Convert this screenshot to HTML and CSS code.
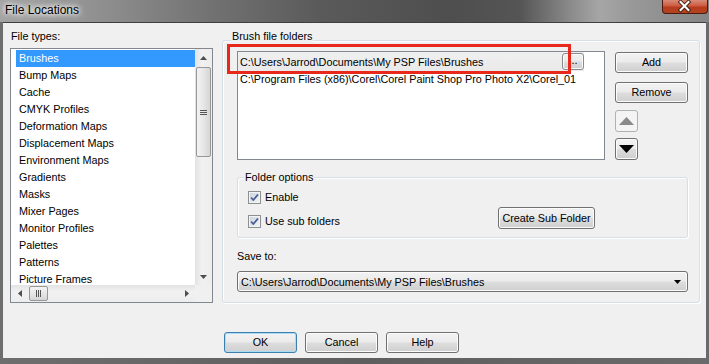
FILE: index.html
```html
<!DOCTYPE html>
<html>
<head>
<meta charset="utf-8">
<title>File Locations</title>
<link rel="stylesheet" href="styles.css">
</head>
<body>
<div class="window">
  <div class="titlebar">
    <div class="title">File Locations</div>
    <div class="close">
      <svg width="46" height="14" viewBox="0 0 46 14">
        <path d="M19 3 L27 11 M27 3 L19 11" stroke="#3a1a10" stroke-width="4" stroke-linecap="square"/>
        <path d="M19 3 L27 11 M27 3 L19 11" stroke="#ffffff" stroke-width="2.2" stroke-linecap="square"/>
      </svg>
    </div>
  </div>
  <div class="frame">
    <div class="client">
      <div class="main">
        <div class="types">
          <div class="label">File types:</div>
          <div class="listbox">
            <ul class="items">
              <li class="sel">Brushes</li>
              <li>Bump Maps</li>
              <li>Cache</li>
              <li>CMYK Profiles</li>
              <li>Deformation Maps</li>
              <li>Displacement Maps</li>
              <li>Environment Maps</li>
              <li>Gradients</li>
              <li>Masks</li>
              <li>Mixer Pages</li>
              <li>Monitor Profiles</li>
              <li>Palettes</li>
              <li>Patterns</li>
              <li>Picture Frames</li>
            </ul>
            <div class="vscroll">
              <div class="arrow"><svg width="7" height="4" viewBox="0 0 7 4"><path d="M0 4 L3.5 0 L7 4 Z" fill="#4d4d4d"/></svg></div>
              <div class="vthumb"><span class="grip-v"></span></div>
              <div class="track"></div>
              <div class="arrow"><svg width="7" height="4" viewBox="0 0 7 4"><path d="M0 0 L3.5 4 L7 0 Z" fill="#4d4d4d"/></svg></div>
            </div>
            <div class="hscroll">
              <div class="arrow"><svg width="4" height="7" viewBox="0 0 4 7"><path d="M4 0 L0 3.5 L4 7 Z" fill="#4d4d4d"/></svg></div>
              <div class="hthumb"><span class="grip-h"></span></div>
              <div class="track"></div>
              <div class="arrow"><svg width="4" height="7" viewBox="0 0 4 7"><path d="M0 0 L4 3.5 L0 7 Z" fill="#4d4d4d"/></svg></div>
            </div>
            <div class="corner"></div>
          </div>
        </div>
        <div class="group brush">
          <div class="group-title">Brush file folders</div>
          <div class="folders-row">
            <div class="folders">
              <div class="edit-row">
                <span class="edit-text">C:\Users\Jarrod\Documents\My PSP Files\Brushes</span>
                <span class="btn browse">...</span>
              </div>
              <div class="folder-row">C:\Program Files (x86)\Corel\Corel Paint Shop Pro Photo X2\Corel_01</div>
            </div>
            <div class="side-buttons">
              <span class="btn side">Add</span>
              <span class="btn side remove">Remove</span>
              <span class="btn square disabled">
                <svg width="15" height="8" viewBox="0 0 15 8"><path d="M0 8 L7.5 0 L15 8 Z" fill="#8a8a8a"/></svg>
              </span>
              <span class="btn square down">
                <svg width="15" height="8" viewBox="0 0 15 8"><path d="M0 0 L7.5 8 L15 0 Z" fill="#000"/></svg>
              </span>
            </div>
          </div>
          <div class="group options">
            <div class="group-title small">Folder options</div>
            <div class="options-body">
              <div class="checks">
                <div class="check-row"><span class="checkbox"><svg width="11" height="11" viewBox="0 0 11 11"><path d="M2 5.5 L4.3 8 L9 2.5" fill="none" stroke="#4a5d8e" stroke-width="1.8"/></svg></span>Enable</div>
                <div class="check-row"><span class="checkbox"><svg width="11" height="11" viewBox="0 0 11 11"><path d="M2 5.5 L4.3 8 L9 2.5" fill="none" stroke="#4a5d8e" stroke-width="1.8"/></svg></span>Use sub folders</div>
              </div>
              <span class="btn create">Create Sub Folder</span>
            </div>
          </div>
          <div class="label save">Save to:</div>
          <div class="combo">
            <span class="combo-text">C:\Users\Jarrod\Documents\My PSP Files\Brushes</span>
            <svg width="7" height="4" viewBox="0 0 7 4"><path d="M0 0 L3.5 4 L7 0 Z" fill="#000"/></svg>
          </div>
        </div>
      </div>
      <div class="dialog-buttons">
        <span class="btn dlg default">OK</span>
        <span class="btn dlg">Cancel</span>
        <span class="btn dlg">Help</span>
      </div>
    </div>
  </div>
</div>
<div class="annotation"></div>
</body>
</html>
```

FILE: styles.css
```css
* { box-sizing: border-box; }

html, body {
  margin: 0;
  padding: 0;
}

body {
  width: 709px;
  height: 364px;
  overflow: hidden;
  background: #575757;
  font-family: "Liberation Sans", Arial, sans-serif;
  font-size: 10.8px;
  color: #000;
  position: relative;
}

.window {
  display: flex;
  flex-direction: column;
  height: 364px;
}

.titlebar {
  flex: none;
  height: 22px;
  display: flex;
  justify-content: space-between;
  align-items: flex-start;
  background: linear-gradient(90deg, #a4a4a4 0px, #929292 90px, #727272 210px, #5a5a5a 320px, #4e4e4e 450px, #555555 520px, #8a8a8a 570px, #a6a6a6 600px, #999999 630px, #858585 709px);
}

.title {
  padding: 3px 0 0 5px;
  font-size: 12px;
  line-height: 14px;
  color: #000;
  text-shadow: 0 0 4px #ffffff, 0 0 6px #ffffff, 0 0 8px rgba(255,255,255,0.8);
}

.close {
  width: 46px;
  height: 14px;
  margin-right: 1px;
  border: 1px solid #4c1a10;
  border-top: none;
  border-radius: 0 0 4px 4px;
  background: linear-gradient(#d98b79 0%, #cc5a40 45%, #b83a1e 55%, #b1451f 100%);
  display: flex;
}

.close svg {
  margin: -1px 0 0 -1px;
}

.frame {
  flex: 1;
  display: flex;
  padding: 0 3px 6px 3px;
  background: linear-gradient(90deg, #6e6e6e, #5e5e5e 50%, #6a6a6a);
}

.client {
  flex: 1;
  background: #f0f0f0;
  border-top: 1px solid #3f3f3f;
  display: flex;
  flex-direction: column;
  padding: 7px 6px 0 7px;
}

.main {
  display: grid;
  grid-template-columns: 203px 478px;
  column-gap: 9px;
}

.label {
  line-height: 13px;
  height: 13px;
  padding-left: 1px;
}

.types .label {
  margin-bottom: 5px;
}

/* ---------- list box ---------- */
.listbox {
  width: 203px;
  height: 255px;
  border: 1px solid #828790;
  background: #fff;
  display: grid;
  grid-template-columns: 184px 17px;
  grid-template-rows: 236px 17px;
}

.items {
  list-style: none;
  margin: 0;
  padding: 1px 0 0 5px;
  overflow: hidden;
}

.items li {
  height: 17px;
  line-height: 17px;
  padding-left: 3px;
  white-space: nowrap;
}

.items li.sel {
  background: #3399ff;
  color: #fff;
}

.vscroll {
  display: flex;
  flex-direction: column;
  background: linear-gradient(90deg, #e3e3e3, #f1f1f1 40%, #ededed);
}

.vscroll .arrow {
  height: 17px;
  display: flex;
  align-items: center;
  justify-content: center;
}

.vscroll .track, .hscroll .track {
  flex: 1;
}

.vthumb {
  height: 90px;
  margin: 1px 1px 0 1px;
  border: 1px solid #979797;
  border-radius: 2px;
  background: linear-gradient(90deg, #f3f3f3, #e6e6e6 50%, #d5d5d5);
  display: flex;
  align-items: center;
  justify-content: center;
}

.grip-v {
  width: 7px;
  height: 5px;
  background: repeating-linear-gradient(180deg, #555 0 1px, transparent 1px 2px);
}

.hscroll {
  display: flex;
  background: linear-gradient(180deg, #e3e3e3, #f1f1f1 40%, #ededed);
}

.hscroll .arrow {
  width: 17px;
  display: flex;
  align-items: center;
  justify-content: center;
}

.hthumb {
  width: 19px;
  margin: 1px 0 1px 1px;
  border: 1px solid #979797;
  border-radius: 2px;
  background: linear-gradient(180deg, #f3f3f3, #e6e6e6 50%, #d5d5d5);
  display: flex;
  align-items: center;
  justify-content: center;
}

.grip-h {
  width: 5px;
  height: 7px;
  background: repeating-linear-gradient(90deg, #555 0 1px, transparent 1px 2px);
}

.corner {
  background: #f0f0f0;
}

/* ---------- group boxes ---------- */
.group {
  border: 1px solid #d5dfe5;
  border-radius: 3px;
  box-shadow: inset 1px 1px 0 #ffffff, 1px 1px 0 #ffffff;
}

.group-title {
  width: fit-content;
  line-height: 13px;
  height: 13px;
  padding: 0 1px;
  background: #f0f0f0;
}

.brush {
  margin-top: 10px;
  padding: 0 11px 0 14px;
  display: flex;
  flex-direction: column;
}

.brush > .group-title {
  margin: -11px 0 0 -6px;
}

.folders-row {
  display: flex;
  gap: 10px;
  margin-top: 8px;
}

.folders {
  width: 369px;
  height: 109px;
  border: 1px solid #828790;
  background: #fff;
}

.edit-row {
  width: 346px;
  height: 19px;
  display: flex;
  align-items: center;
  justify-content: space-between;
  background: linear-gradient(#f0f0f0, #e9e9e9);
}

.edit-text {
  padding-left: 2px;
  white-space: nowrap;
}

.folder-row {
  height: 17px;
  line-height: 17px;
  padding-left: 2px;
  white-space: nowrap;
}

/* ---------- buttons ---------- */
.btn {
  display: flex;
  align-items: center;
  justify-content: center;
  border: 1px solid #707070;
  border-radius: 3px;
  background: linear-gradient(#f2f2f2 0%, #ebebeb 48%, #dddddd 52%, #cfcfcf 100%);
  box-shadow: inset 0 0 0 1px #fcfcfc;
  white-space: nowrap;
  line-height: 13px;
}

.browse {
  width: 22px;
  height: 17px;
  align-items: flex-end;
  padding-bottom: 2px;
  border-color: #8a8a8a;
}

.side-buttons {
  display: flex;
  flex-direction: column;
  padding-top: 1px;
}

.side {
  width: 73px;
  height: 21px;
  margin-bottom: 9px;
}

.side.remove {
  margin-bottom: 7px;
}

.square {
  width: 23px;
  height: 22px;
}

.square.disabled {
  border-color: #adb2b5;
  background: #f4f4f4;
  box-shadow: none;
  margin-bottom: 6px;
}

/* ---------- folder options ---------- */
.options {
  margin-top: 17px;
  padding: 0 0 0 10px;
  display: flex;
  flex-direction: column;
}

.options > .group-title {
  margin: -7px 0 0 -4px;
}

.options-body {
  display: flex;
  align-items: flex-end;
  margin-top: 7px;
  padding-bottom: 9px;
}

.checks {
  width: 250px;
  display: flex;
  flex-direction: column;
  gap: 11px;
}

.check-row {
  height: 13px;
  line-height: 13px;
  display: flex;
  align-items: center;
}

.checkbox {
  width: 13px;
  height: 13px;
  margin-right: 4px;
  border: 1px solid #8e8f8f;
  background: linear-gradient(135deg, #c9d2de, #f4f6f8);
  box-shadow: inset 0 0 0 1px #f4f4f4;
  display: flex;
  align-items: center;
  justify-content: center;
}

.create {
  width: 97px;
  height: 22px;
  margin-bottom: -1px;
}

/* ---------- save to ---------- */
.save {
  margin-top: 12px;
  padding-left: 0;
}

.combo {
  margin-top: 8px;
  height: 21px;
  display: flex;
  align-items: center;
  justify-content: space-between;
  padding: 0 6px 0 3px;
  border: 1px solid #707070;
  border-radius: 3px;
  background: linear-gradient(#f2f2f2 0%, #ebebeb 48%, #dddddd 52%, #cfcfcf 100%);
  box-shadow: inset 0 0 0 1px #fcfcfc;
}

/* ---------- dialog buttons ---------- */
.dialog-buttons {
  display: flex;
  gap: 8px;
  margin-top: 29px;
  padding-left: 214px;
}

.dlg {
  width: 73px;
  height: 21px;
}

.dlg.default {
  border-color: #3c7fb1;
  box-shadow: inset 0 0 0 1px #a9dcf5;
}

/* ---------- annotation overlay ---------- */
.annotation {
  position: absolute;
  left: 227px;
  top: 44px;
  width: 344px;
  height: 30px;
  border: 3px solid #e8281a;
}
```
